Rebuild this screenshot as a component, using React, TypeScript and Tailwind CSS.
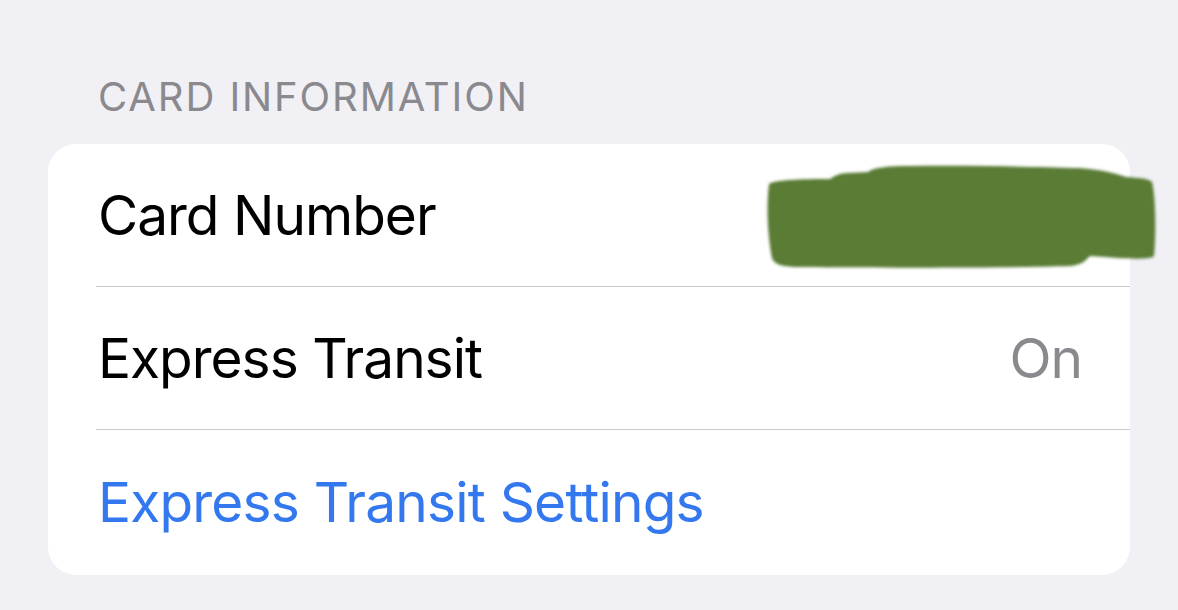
const rows = [
  { label: "Card Number", value: "", hidden: true },
  { label: "Express Transit", value: "On" },
];

// Hand-drawn marker stroke used to hide the card number
function Scribble() {
  return (
    <svg
      className="absolute left-[760px] top-[158px] pointer-events-none"
      width="404"
      height="118"
      viewBox="0 0 404 118"
    >
      <defs>
        <filter id="soft" x="-5%" y="-10%" width="110%" height="120%">
          <feGaussianBlur stdDeviation="1.6" />
        </filter>
      </defs>
      <path
        filter="url(#soft)"
        fill="#5a7b36"
        d="M9 26 C14 22 40 21 70 21 C74 18 80 15 88 15 L108 14 C114 9 130 8 150 8
           C210 7 280 9 318 10 C336 11 352 14 366 19 C378 20 388 20 392 24
           C396 40 396 80 394 98 C390 102 370 101 330 98 C326 102 322 107 310 108
           C250 110 120 110 40 109 C24 109 14 107 12 100 C8 80 6 50 9 26 Z"
      />
    </svg>
  );
}

export default function App() {
  return (
    <div
      className="relative h-[610px] w-[1178px] overflow-hidden bg-[#f0f0f5] px-[48px]"
      style={{ fontFamily: "Inter, 'Noto Sans', sans-serif" }}
    >
      <div className="pt-[77px] pl-[50px] h-[144px] text-[40px] leading-none text-[#8a898e] tracking-[1.9px]">
        CARD INFORMATION
      </div>

      <div className="rounded-[28px] bg-white">
        {rows.map((row) => (
          <div key={row.label} className="pl-[48px]">
            <div className="flex h-[143px] items-center justify-between border-b border-[#c9c9cc] pl-[2px] pr-[48px] text-[55px] leading-none tracking-[-1px]">
              <span className="text-black">{row.label}</span>
              {row.value && <span className="text-[#8a8a8e]">{row.value}</span>}
            </div>
          </div>
        ))}
        <div className="flex h-[145px] items-center pl-[50px] text-[55px] leading-none tracking-[-0.8px] text-[#3478f0]">
          Express Transit Settings
        </div>
      </div>

      <Scribble />
    </div>
  );
}
